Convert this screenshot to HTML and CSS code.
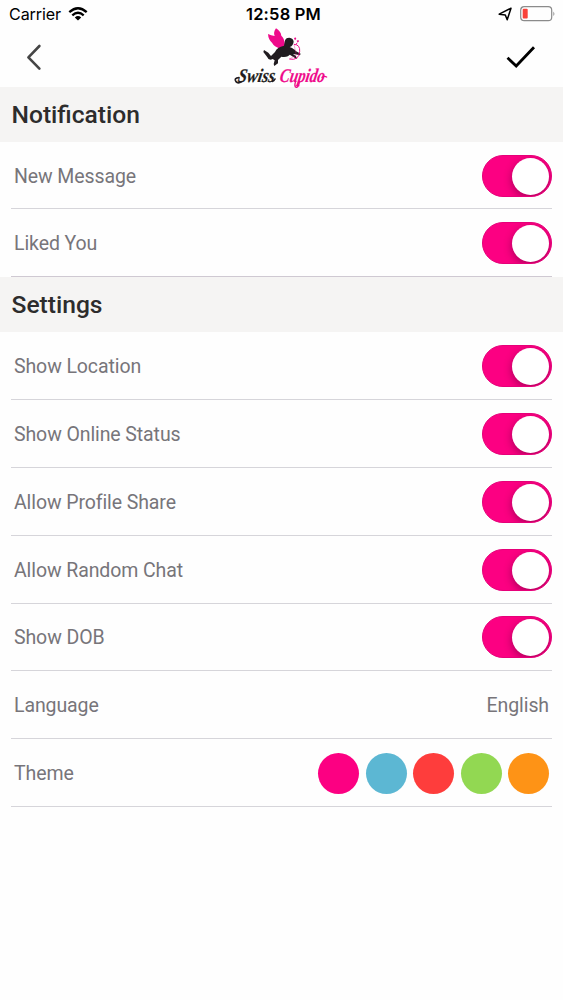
FILE: index.html
```html
<!DOCTYPE html>
<html lang="en">
<head>
<meta charset="utf-8">
<title>Swiss Cupido – Settings</title>
<link rel="stylesheet" href="styles.css">
</head>
<body>
<header class="top">
  <div class="status">
    <div class="status-left"><span class="carrier">Carrier</span>
      <svg class="wifi" width="20" height="14" viewBox="0 0 20 14"><g fill="none" stroke="#000" stroke-width="2.3"><path d="M1.3 5.1Q10-2.7 18.7 5.1"/><path d="M4.3 8.4Q10 3.2 15.7 8.4"/></g><path d="M6.8 10.4Q10 7.8 13.2 10.4L10 13.6Z"/></svg>
    </div>
    <div class="clock">12:58 PM</div>
    <div class="status-right">
      <svg width="14" height="14" viewBox="0 0 14 14"><path d="M1.2 7.2L13 1.2 9.2 12.8 7.3 7.9Z" fill="none" stroke="#000" stroke-width="1.5" stroke-linejoin="round"/></svg>
      <svg width="36" height="16" viewBox="0 0 36 16"><rect x=".7" y=".7" width="31" height="14" rx="3.5" fill="none" stroke="#8b8b8b" stroke-width="1.2"/><rect x="2.7" y="2.8" width="5" height="9.8" rx="1" fill="#f9423a"/><path d="M33.4 5.5Q35.4 7.8 33.4 10Z" fill="#8b8b8b"/></svg>
    </div>
  </div>
  <div class="nav">
    <svg class="back" width="20" height="28" viewBox="0 0 20 28"><path d="M15.4 3L4.4 14.3 15.4 25.6" fill="none" stroke="#454545" stroke-width="2.6" stroke-linecap="round" stroke-linejoin="round"/></svg>
    <svg class="logo" width="100" height="62" viewBox="22 78 300 186">
      <path d="M172 144Q148 138 142 125Q131 116 130 99Q139 104 150 105Q145 94 154 82Q168 90 170 104Q179 112 180 127L184 139Z" fill="#ef0a8b"/>
      <g fill="#211c20">
        <path d="M180 123Q181 110 194 110Q206 111 207 122Q205 135 195 138Q211 145 213 150L228 158 226 163 211 160 197 159Q190 170 170 167L160 177 160 187 149 195 147 189 150 178 144 174Q133 181 127 167L116 153 118 147 131 155 139 165 151 153Q157 138 178 134Z"/>
        <path d="M195 153L213 164 218 174 211 171 193 160Z"/>
      </g>
      <path d="M208 130Q227 131 225 152Q222 180 194 174" fill="none" stroke="#ef0a8b" stroke-width="3"/>
      <path d="M208 130L215 162 194 174" fill="none" stroke="#ef0a8b" stroke-width="1"/>
      <path d="M208 112l4-3 3 4-4 5zM216 119l5-2 2 4-4 4zM214 127l3-1 1 3-3 2z" fill="#ef0a8b"/>
      <g class="wordmark"><text transform="translate(38 243) skewX(-10)" textLength="110" lengthAdjust="spacingAndGlyphs" fill="#211c20" stroke="#211c20">Swiss</text><text transform="translate(163 243) skewX(-10)" textLength="135" lengthAdjust="spacingAndGlyphs" fill="#ef0a8b" stroke="#ef0a8b">Cupido</text></g>
      <path d="M43 230Q27 231 34 242Q40 249 51 242M143 241Q148 240 151 234" fill="none" stroke="#211c20" stroke-width="5" stroke-linecap="round"/>
      <path d="M292 229Q299 224 306 228M213 240Q207 260 216 259Q223 256 224 241" fill="none" stroke="#ef0a8b" stroke-width="4" stroke-linecap="round"/>
    </svg>
    <svg class="check" width="30" height="24" viewBox="0 0 30 24"><path d="M1.5 12.8L10.2 21 28 2.2" fill="none" stroke="#000" stroke-width="2.8"/></svg>
  </div>
</header>
<main>
  <section>
    <h2>Notification</h2>
    <div class="row"><span>New Message</span><i class="switch"></i></div>
    <div class="row"><span>Liked You</span><i class="switch"></i></div>
  </section>
  <section>
    <h2>Settings</h2>
    <div class="row"><span>Show Location</span><i class="switch"></i></div>
    <div class="row"><span>Show Online Status</span><i class="switch"></i></div>
    <div class="row"><span>Allow Profile Share</span><i class="switch"></i></div>
    <div class="row"><span>Allow Random Chat</span><i class="switch"></i></div>
    <div class="row"><span>Show DOB</span><i class="switch"></i></div>
    <div class="row"><span>Language</span><span class="value">English</span></div>
    <div class="row"><span>Theme</span><div class="swatches"><i class="pink"></i><i class="blue"></i><i class="red"></i><i class="green"></i><i class="orange"></i></div></div>
  </section>
</main>
</body>
</html>
```
FILE: styles.css
```css
* { box-sizing: border-box; }
body { margin: 0; width: 563px; min-height: 1000px; background: #fefefe; font-family: Roboto, sans-serif; }
svg { display: block; }
.top { height: 87px; }
.status { height: 28px; display: grid; grid-template-columns: 1fr auto 1fr; align-items: center; padding: 0 7px 0 9px; font-family: Inter, sans-serif; color: #000; }
.status-left { display: flex; align-items: center; gap: 7px; font-size: 16.1px; letter-spacing: -.1px; }
.wifi { margin-top: -1px; }
.clock { padding-left: 2px; font-size: 16.5px; font-weight: 600; letter-spacing: .2px; }
.status-right { display: flex; justify-content: flex-end; align-items: center; gap: 8px; }
.nav { height: 59px; display: grid; grid-template-columns: 1fr auto 1fr; padding: 0 27px 0 24px; }
.back { margin-top: 15px; }
.logo { margin: -1px 0 0 3px; overflow: visible; }
.wordmark { font: italic 700 58px "Liberation Serif", serif; stroke-width: .6; }
.check { justify-self: end; margin-top: 17px; }
h2 { margin: 0; height: 54.6px; padding-left: 11.5px; background: #f5f4f3; color: #2d2c2c; font-size: 24.6px; line-height: 56px; font-weight: 500; }
.row { height: 67.9px; margin: 0 11px; padding: 1px 0 0 3px; border-bottom: 1px solid #d6d5da; display: flex; align-items: center; justify-content: space-between; font-size: 19.5px; letter-spacing: -.1px; color: #77757a; }
section:first-child .row:last-child { border-color: #cfc9d2; }
.row span { padding-top: 1px; }
.value { padding-right: 3px; }
.switch { width: 70px; height: 42px; border-radius: 21px; background: #fc0082; border: 1px solid #e60079; padding: 2px; display: flex; justify-content: flex-end; overflow: hidden; }
.switch::after { content: ""; width: 37px; height: 37px; border-radius: 50%; background: #fff; box-shadow: 0 3px 8px rgba(70,0,40,.45); }
.swatches { display: flex; gap: 6.6px; padding-right: 2.6px; }
.swatches i { width: 41px; height: 41px; border-radius: 50%; }
.pink { background: #fc0082; }
.blue { background: #5cb7d3; }
.red { background: #fe3d3c; }
.green { background: #92d852; }
.orange { background: #fe9316; }
```
